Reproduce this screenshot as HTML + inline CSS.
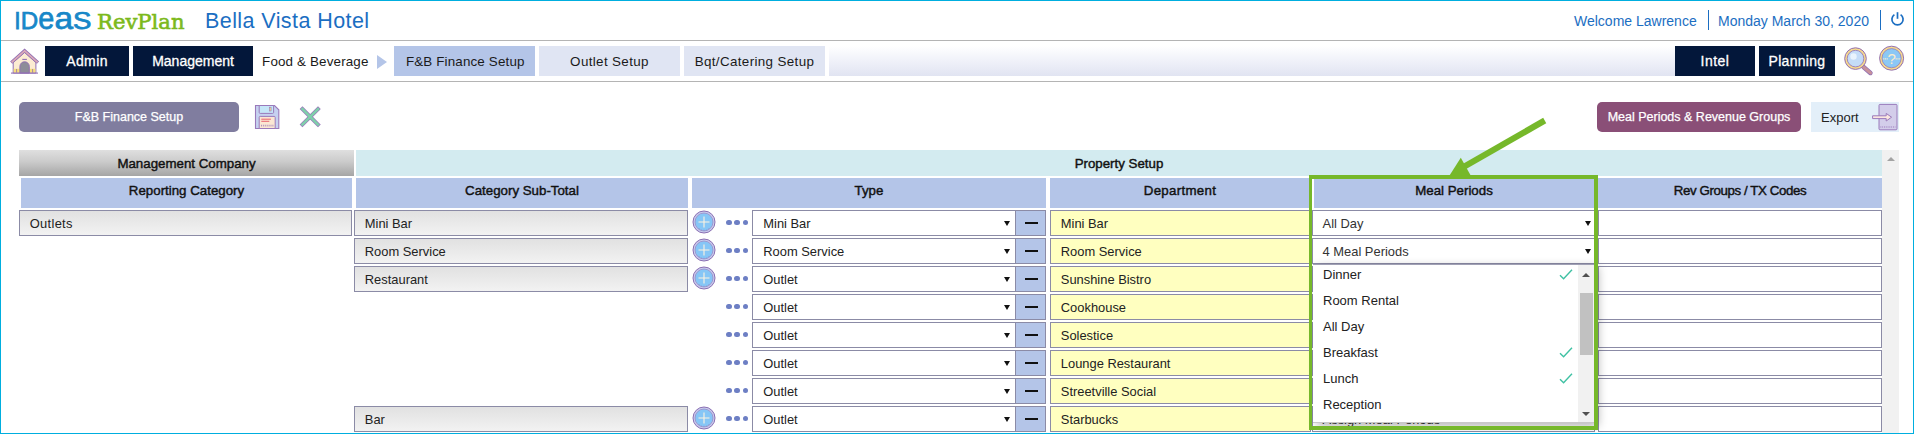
<!DOCTYPE html>
<html><head><meta charset="utf-8"><title>IDeaS RevPlan - F&amp;B Finance Setup</title>
<style>
html,body{margin:0;padding:0;background:#fff;}
body{width:1914px;height:434px;overflow:hidden;position:relative;font-family:"Liberation Sans",sans-serif;color:#222;}
#frame{position:absolute;left:0;top:0;width:1912px;height:432px;border:1px solid #00aedf;overflow:hidden;}
#page{position:absolute;left:-1px;top:-1px;width:1914px;height:434px;}
#page div,#page span,#page svg,#page b,#page i{position:absolute;box-sizing:border-box;}
.hl{left:1px;width:1912px;height:1px;background:#b4b4b4;}
.logo{left:15px;top:5px;height:30px;white-space:nowrap;color:#1787c8;}
.logo span{position:static!important;}
.nb{top:46px;height:30px;background:#03173a;color:#fff;-webkit-text-stroke:.3px #fff;font-size:14px;line-height:30px;text-align:center;}
.tab{top:46px;height:30px;background:#e0e5f3;color:#1a1a1a;font-size:13.4px;line-height:32px;text-align:center;}
.tab.act{background:#b4c5e8;}
.hd{font-size:14px;color:#1b6ec2;top:11px;line-height:20px;white-space:nowrap;}
.th{top:178px;height:30px;background:#b4c5e8;font-size:13.3px;-webkit-text-stroke:.42px #111;line-height:26px;text-align:center;color:#111;}
.gbox{height:26px;border:1px solid #8b8ba6;background:linear-gradient(#e1e1e1,#f2f2f2);font-size:12.9px;line-height:26px;padding-left:9.8px;color:#222;white-space:nowrap;}
.sel{height:26px;border:1px solid #8b8ba6;background:#fff;font-size:12.9px;line-height:26px;padding-left:10.3px;color:#222;white-space:nowrap;}
.sel.mp{padding-left:9.6px;color:#333;}
.arr{right:4.6px;top:10.2px;width:0;height:0;border-left:3.4px solid transparent;border-right:3.4px solid transparent;border-top:5.8px solid #111;}
.sel.mp .arr{right:3.4px;}
.minus{left:1015px;width:31px;height:26px;border:1px solid #8b8ba6;background:#b4c5e8;}
.minus i{left:9px;top:11px;width:12.5px;height:2px;background:#111;}
.dept{left:1050px;width:261px;height:26px;border:1px solid #8b8ba6;background:#ffffc0;font-size:12.9px;line-height:26px;padding-left:9.8px;color:#222;white-space:nowrap;}
.rev{left:1598px;width:284px;height:26px;border:1px solid #8b8ba6;background:#fff;}
.dots{left:726px;width:24px;height:6px;}
.dots i{top:.15px;width:5.3px;height:5.3px;border-radius:50%;background:#6d7fc4;}
.dots i:nth-child(1){left:0.25px}.dots i:nth-child(2){left:8.45px}.dots i:nth-child(3){left:16.75px}
#list{left:1313px;top:264px;width:281px;height:159px;background:#fff;border-top:1px solid #a0a0b4;border-bottom:1px solid #c8c8c8;overflow:hidden;box-shadow:4px 3px 9px rgba(0,0,0,.3);}
.li{left:0;width:265px;height:26px;font-size:13px;line-height:26px;padding-left:10px;color:#222;white-space:nowrap;}
.chk{right:5px;top:7px;}
#sb{left:265px;top:0;width:16px;height:158px;background:#f1f1f1;}
#sb .thumb{left:2px;top:28px;width:12.5px;height:62px;background:#c1c1c1;}
.tri-u{width:0;height:0;border-left:4.2px solid transparent;border-right:4.2px solid transparent;border-bottom:4.2px solid #505050;}
.tri-d{width:0;height:0;border-left:4.2px solid transparent;border-right:4.2px solid transparent;border-top:4.2px solid #505050;}
#green{left:1309.3px;top:175px;width:288.7px;height:255px;border:4px solid #76b82a;border-left-width:3.7px;}
</style></head><body>
<div id="frame"><div id="page">

<!-- header -->
<svg style="left:0;top:0" width="200" height="40" viewBox="0 0 200 40" font-family="Liberation Sans, sans-serif" fill="#1787c8" stroke="#1787c8" stroke-width=".75">
<text x="14.3" y="28.8" font-size="24.6" textLength="6.4" lengthAdjust="spacingAndGlyphs">I</text>
<text x="20.8" y="28.8" font-size="24.6" textLength="17.4" lengthAdjust="spacingAndGlyphs">D</text>
<text x="38.2" y="28.7" font-size="31.4" textLength="16" lengthAdjust="spacingAndGlyphs">e</text>
<text x="54.5" y="28.7" font-size="31.4" textLength="18.6" lengthAdjust="spacingAndGlyphs">a</text>
<text x="73" y="28.8" font-size="24.2" textLength="18.4" lengthAdjust="spacingAndGlyphs">S</text>
<text x="97" y="28.8" font-size="20.5" font-weight="normal" style="font-family:'DejaVu Serif','Liberation Serif',serif" fill="#7cb91c" stroke="#7cb91c" stroke-width=".6" textLength="87.5" lengthAdjust="spacingAndGlyphs">RevPlan</text>
</svg>
<div class="hd" style="left:205px;top:7px;font-size:21.5px;line-height:28px;letter-spacing:.42px;">Bella Vista Hotel</div>
<div class="hd" style="left:1574px;top:10.5px">Welcome Lawrence</div>
<div style="left:1708px;top:10px;width:1px;height:20px;background:#1b6ec2"></div>
<div class="hd" style="left:1718px;top:10.5px">Monday March 30, 2020</div>
<div style="left:1880px;top:10px;width:1px;height:20px;background:#1b6ec2"></div>
<svg style="left:1889px;top:11px" width="17" height="17" viewBox="0 0 17 17"><path d="M5.4 3.6A5.6 5.6 0 1 0 11.6 3.6" fill="none" stroke="#1b6ec2" stroke-width="1.7"/><path d="M8.5 1.2v6.6" stroke="#1b6ec2" stroke-width="1.7"/></svg>
<div class="hl" style="top:40px"></div>
<div class="hl" style="top:81px"></div>

<!-- nav -->
<svg style="left:9px;top:47.2px" width="32" height="30" viewBox="0 0 32 30">
<path d="M4.2 15.5V26H26.9V15.5L15.6 5.5Z" fill="#fcecd2" stroke="#9270b4" stroke-width="1"/>
<rect x="4.7" y="21.8" width="21.7" height="3.8" fill="#f7df7c"/>
<path d="M10.9 26V19.5a4.7 4.7 0 0 1 9.4 0V26Z" fill="#8e8d99" stroke="#9270b4" stroke-width="1"/>
<path d="M2.2 15.6L15.6 3.6L29 15.6" fill="none" stroke="#9270b4" stroke-width="3.2" stroke-linejoin="miter"/>
<path d="M2.6 15.3L15.6 3.9L28.6 15.3" fill="none" stroke="#dcaab8" stroke-width="1.6"/>
<path d="M13.3 12.4h4.6" stroke="#9270b4" stroke-width="1.1"/>
<path d="M2 26.1h27" stroke="#9270b4" stroke-width="1.1"/>
<path d="M7.6 22v3.6M23.6 22v3.6" stroke="#9270b4" stroke-width=".8"/>
</svg>
<div class="nb" style="left:45px;width:84px;letter-spacing:.4px;">Admin</div>
<div class="nb" style="left:133px;width:120px;">Management</div>
<div class="tab" style="left:256.3px;width:118px;background:none;letter-spacing:.15px;">Food &amp; Beverage</div>
<div style="left:377px;top:55px;width:0;height:0;border-top:7px solid transparent;border-bottom:7px solid transparent;border-left:10px solid #b4c5e8;"></div>
<div class="tab act" style="left:394px;width:141px;letter-spacing:.15px;padding-left:1.5px;">F&amp;B Finance Setup</div>
<div class="tab" style="left:539px;width:141px;letter-spacing:.36px;">Outlet Setup</div>
<div class="tab" style="left:684px;width:141px;letter-spacing:.36px;">Bqt/Catering Setup</div>
<div style="left:829px;top:46px;width:846px;height:30px;background:linear-gradient(#ffffff 0%,#f4f5fb 35%,#e1e4f2 100%);"></div>
<div class="nb" style="left:1675px;width:80px;letter-spacing:.5px;">Intel</div>
<div class="nb" style="left:1759px;width:76px;letter-spacing:.3px;">Planning</div>
<svg style="left:1842px;top:45px" width="34" height="33" viewBox="0 0 34 33">
<path d="M21.5 22L28.4 27.9" stroke="#9270b4" stroke-width="4.6" stroke-linecap="round"/>
<path d="M21.5 22L28.4 27.9" stroke="#c7929c" stroke-width="3.2" stroke-linecap="round"/>
<circle cx="13.5" cy="13.6" r="10.8" fill="#f6da8c" stroke="#9270b4" stroke-width="1"/>
<circle cx="13.5" cy="13.6" r="8.3" fill="#c4dcf8" stroke="#9270b4" stroke-width=".8"/>
<circle cx="11.5" cy="11.5" r="3.2" fill="#e9f3fd"/>
</svg>
<svg style="left:1878px;top:45px" width="28" height="28" viewBox="0 0 28 28">
<circle cx="13.6" cy="13.2" r="12" fill="#f6da8c" stroke="#9270b4" stroke-width="1"/>
<circle cx="13.6" cy="13.2" r="9.6" fill="#8cc8f5" stroke="#9270b4" stroke-width=".7"/>
<text x="13.6" y="18.6" font-size="15" text-anchor="middle" fill="#fbeccb" font-family="Liberation Sans, sans-serif">?</text>
<path d="M5.2 13.8h4.6M17.6 13.8h4.6" stroke="#fbeccb" stroke-width="1.2" stroke-dasharray="1.2 .6"/>
</svg>

<!-- toolbar -->
<div style="left:19px;top:102px;width:220px;height:30px;border-radius:5px;background:#807d9f;color:#fff;-webkit-text-stroke:.25px #fff;font-size:12.5px;line-height:30px;text-align:center;">F&amp;B Finance Setup</div>
<svg style="left:254px;top:104px" width="27" height="26" viewBox="0 0 27 26">
<path d="M1.5 1.5H20.5L24.8 5.8V24.5H1.5Z" fill="#c6d1f0" stroke="#9a7abb" stroke-width="1.1"/>
<path d="M5.2 1.5V8.4a1 1 0 0 0 1 1H18.6a1 1 0 0 0 1-1V1.5Z" fill="#c5e6f8" stroke="#9a7abb" stroke-width="1"/>
<rect x="15.3" y="3.2" width="1.8" height="3.8" fill="#f6da8c" stroke="#9a7abb" stroke-width=".6"/>
<path d="M5.2 24.5V13.4a1 1 0 0 1 1-1H20.2a1 1 0 0 1 1 1V24.5Z" fill="#fbe7d3" stroke="#9a7abb" stroke-width="1"/>
<path d="M7.3 15.2h9.6M7.3 17.3h8" stroke="#e8636f" stroke-width="1"/>
<path d="M7 21.6h12.6" stroke="#9a7abb" stroke-width="1.6" stroke-dasharray="1 .9" opacity=".75"/>
</svg>
<svg style="left:298px;top:105px" width="26" height="24" viewBox="0 0 26 24">
<path d="M4.4 4L20 19.6M20 4L4.4 19.6" stroke="#9a7abb" stroke-width="3.9" stroke-linecap="square"/>
<path d="M4.4 4L20 19.6M20 4L4.4 19.6" stroke="#7fd0ab" stroke-width="2.5" stroke-linecap="square"/>
</svg>
<div style="left:1597px;top:102px;width:204px;height:30px;border-radius:5px;background:#8a4f77;color:#fff;-webkit-text-stroke:.25px #fff;font-size:12.5px;line-height:30px;text-align:center;">Meal Periods &amp; Revenue Groups</div>
<div style="left:1811px;top:102px;width:88px;height:30px;background:#e3eff9;color:#222;font-size:13px;line-height:31px;padding-left:10px;">Export</div>
<svg style="left:1870px;top:102px" width="30" height="30" viewBox="0 0 30 30">
<rect x="9" y="2.4" width="18" height="25.4" rx="1" fill="#d3cdea" stroke="#9a7abb" stroke-width="1"/>
<path d="M10.4 25h15" stroke="#9a7abb" stroke-width="1.4" stroke-dasharray=".9 .9" opacity=".7"/>
<path d="M2.6 13.8H16.2V11.4L21.6 15.2L16.2 19V16.6H2.6Z" fill="#fbe7e0" stroke="#9a7abb" stroke-width="1" stroke-linejoin="round"/>
</svg>

<!-- grid headers -->
<div style="left:19px;top:150px;width:335px;height:26px;background:linear-gradient(#dfdfdf,#cbcbcb 45%,#a5a5a5);font-size:13.3px;-webkit-text-stroke:.42px #111;line-height:27.5px;text-align:center;color:#111;">Management Company</div>
<div style="left:356px;top:150px;width:1526px;height:26px;background:#d3ebf0;font-size:13.3px;-webkit-text-stroke:.42px #111;line-height:27.5px;text-align:center;color:#111;">Property Setup</div>
<div class="th" style="left:21px;width:331px;">Reporting Category</div>
<div class="th" style="left:356px;width:332px;">Category Sub-Total</div>
<div class="th" style="left:692px;width:354px;">Type</div>
<div class="th" style="left:1050px;width:260px;letter-spacing:.3px;">Department</div>
<div class="th" style="left:1314px;width:280px;">Meal Periods</div>
<div class="th" style="left:1598px;width:284px;letter-spacing:-.4px;">Rev Groups / TX Codes</div>

<!-- page scrollbar -->
<div style="left:1882px;top:150px;width:17px;height:284px;background:#f1f1f1;"></div>
<div class="tri-u" style="left:1886.5px;top:157px;border-bottom-color:#a3a3a3;"></div>

<!-- rows -->
<div class="gbox" style="left:19px;top:210px;width:333px;letter-spacing:.3px">Outlets</div>
<div class="gbox" style="left:354px;top:210px;width:334px">Mini Bar</div>
<svg class="plus" style="left:692px;top:210.1px" width="24" height="24" viewBox="0 0 24 24"><circle cx="12" cy="12" r="11" fill="#c9cdee" stroke="#8b6fb3" stroke-width="1"/><circle cx="12" cy="12" r="9" fill="#86c6f6" stroke="#9b8cc6" stroke-width="0.8"/><path d="M12 6.5v11M6.5 12h11" stroke="#fdf3e0" stroke-width="1.1" fill="none"/><path d="M7 18.2l.5.8M9.2 19.4l.3.9M12 19.8v1M14.8 19.4l-.3.9M17 18.2l-.5.8" stroke="#8b6fb3" stroke-width="0.7" opacity=".6"/></svg>
<div class="dots" style="top:220px"><i></i><i></i><i></i></div>
<div class="sel" style="left:752px;top:210px;width:264px">Mini Bar<b class="arr"></b></div>
<div class="minus" style="top:210px"><i></i></div>
<div class="dept" style="top:210px">Mini Bar</div>
<div class="sel mp" style="left:1312px;top:210px;width:283px">All Day<b class="arr"></b></div>
<div class="rev" style="top:210px"></div>
<div class="gbox" style="left:354px;top:238px;width:334px">Room Service</div>
<svg class="plus" style="left:692px;top:238.1px" width="24" height="24" viewBox="0 0 24 24"><circle cx="12" cy="12" r="11" fill="#c9cdee" stroke="#8b6fb3" stroke-width="1"/><circle cx="12" cy="12" r="9" fill="#86c6f6" stroke="#9b8cc6" stroke-width="0.8"/><path d="M12 6.5v11M6.5 12h11" stroke="#fdf3e0" stroke-width="1.1" fill="none"/><path d="M7 18.2l.5.8M9.2 19.4l.3.9M12 19.8v1M14.8 19.4l-.3.9M17 18.2l-.5.8" stroke="#8b6fb3" stroke-width="0.7" opacity=".6"/></svg>
<div class="dots" style="top:248px"><i></i><i></i><i></i></div>
<div class="sel" style="left:752px;top:238px;width:264px">Room Service<b class="arr"></b></div>
<div class="minus" style="top:238px"><i></i></div>
<div class="dept" style="top:238px">Room Service</div>
<div class="sel mp" style="left:1312px;top:238px;width:283px">4 Meal Periods<b class="arr"></b></div>
<div class="rev" style="top:238px"></div>
<div class="gbox" style="left:354px;top:266px;width:334px">Restaurant</div>
<svg class="plus" style="left:692px;top:266.1px" width="24" height="24" viewBox="0 0 24 24"><circle cx="12" cy="12" r="11" fill="#c9cdee" stroke="#8b6fb3" stroke-width="1"/><circle cx="12" cy="12" r="9" fill="#86c6f6" stroke="#9b8cc6" stroke-width="0.8"/><path d="M12 6.5v11M6.5 12h11" stroke="#fdf3e0" stroke-width="1.1" fill="none"/><path d="M7 18.2l.5.8M9.2 19.4l.3.9M12 19.8v1M14.8 19.4l-.3.9M17 18.2l-.5.8" stroke="#8b6fb3" stroke-width="0.7" opacity=".6"/></svg>
<div class="dots" style="top:276px"><i></i><i></i><i></i></div>
<div class="sel" style="left:752px;top:266px;width:264px">Outlet<b class="arr"></b></div>
<div class="minus" style="top:266px"><i></i></div>
<div class="dept" style="top:266px">Sunshine Bistro</div>
<div class="sel mp" style="left:1312px;top:266px;width:283px">Assign Meal Periods<b class="arr"></b></div>
<div class="rev" style="top:266px"></div>
<div class="dots" style="top:304px"><i></i><i></i><i></i></div>
<div class="sel" style="left:752px;top:294px;width:264px">Outlet<b class="arr"></b></div>
<div class="minus" style="top:294px"><i></i></div>
<div class="dept" style="top:294px">Cookhouse</div>
<div class="sel mp" style="left:1312px;top:294px;width:283px">Assign Meal Periods<b class="arr"></b></div>
<div class="rev" style="top:294px"></div>
<div class="dots" style="top:332px"><i></i><i></i><i></i></div>
<div class="sel" style="left:752px;top:322px;width:264px">Outlet<b class="arr"></b></div>
<div class="minus" style="top:322px"><i></i></div>
<div class="dept" style="top:322px">Solestice</div>
<div class="sel mp" style="left:1312px;top:322px;width:283px">Assign Meal Periods<b class="arr"></b></div>
<div class="rev" style="top:322px"></div>
<div class="dots" style="top:360px"><i></i><i></i><i></i></div>
<div class="sel" style="left:752px;top:350px;width:264px">Outlet<b class="arr"></b></div>
<div class="minus" style="top:350px"><i></i></div>
<div class="dept" style="top:350px">Lounge Restaurant</div>
<div class="sel mp" style="left:1312px;top:350px;width:283px">Assign Meal Periods<b class="arr"></b></div>
<div class="rev" style="top:350px"></div>
<div class="dots" style="top:388px"><i></i><i></i><i></i></div>
<div class="sel" style="left:752px;top:378px;width:264px">Outlet<b class="arr"></b></div>
<div class="minus" style="top:378px"><i></i></div>
<div class="dept" style="top:378px">Streetville Social</div>
<div class="sel mp" style="left:1312px;top:378px;width:283px">Assign Meal Periods<b class="arr"></b></div>
<div class="rev" style="top:378px"></div>
<div class="gbox" style="left:354px;top:406px;width:334px">Bar</div>
<svg class="plus" style="left:692px;top:406.1px" width="24" height="24" viewBox="0 0 24 24"><circle cx="12" cy="12" r="11" fill="#c9cdee" stroke="#8b6fb3" stroke-width="1"/><circle cx="12" cy="12" r="9" fill="#86c6f6" stroke="#9b8cc6" stroke-width="0.8"/><path d="M12 6.5v11M6.5 12h11" stroke="#fdf3e0" stroke-width="1.1" fill="none"/><path d="M7 18.2l.5.8M9.2 19.4l.3.9M12 19.8v1M14.8 19.4l-.3.9M17 18.2l-.5.8" stroke="#8b6fb3" stroke-width="0.7" opacity=".6"/></svg>
<div class="dots" style="top:416px"><i></i><i></i><i></i></div>
<div class="sel" style="left:752px;top:406px;width:264px">Outlet<b class="arr"></b></div>
<div class="minus" style="top:406px"><i></i></div>
<div class="dept" style="top:406px">Starbucks</div>
<div class="sel mp" style="left:1312px;top:406px;width:283px">Assign Meal Periods<b class="arr"></b></div>
<div class="rev" style="top:406px"></div>

<!-- dropdown list -->
<div id="list">
<div class="li" style="top:-3px">Dinner<svg class="chk" width="14" height="11" viewBox="0 0 14 11"><path d="M1 6.2L4.6 9.8L13 0.8" fill="none" stroke="#3fc1a3" stroke-width="1.4"/></svg></div>
<div class="li" style="top:23px">Room Rental</div>
<div class="li" style="top:49px">All Day</div>
<div class="li" style="top:75px">Breakfast<svg class="chk" width="14" height="11" viewBox="0 0 14 11"><path d="M1 6.2L4.6 9.8L13 0.8" fill="none" stroke="#3fc1a3" stroke-width="1.4"/></svg></div>
<div class="li" style="top:101px">Lunch<svg class="chk" width="14" height="11" viewBox="0 0 14 11"><path d="M1 6.2L4.6 9.8L13 0.8" fill="none" stroke="#3fc1a3" stroke-width="1.4"/></svg></div>
<div class="li" style="top:127px">Reception</div>
<div id="sb"><div class="tri-u" style="left:4px;top:8px"></div><div class="thumb"></div><div class="tri-d" style="left:4px;top:147px"></div></div>
</div>

<!-- annotation -->
<div id="green"></div>
<svg style="left:1430px;top:105px" width="130" height="80" viewBox="1430 105 130 80">
<path d="M1544.7 120.5L1462 167.9" stroke="#76b82a" stroke-width="6.2" fill="none"/>
<path d="M1449.5 175.6L1460.8 157.8L1470.6 175.2Z" fill="#76b82a"/>
</svg>

</div></div>
</body></html>
